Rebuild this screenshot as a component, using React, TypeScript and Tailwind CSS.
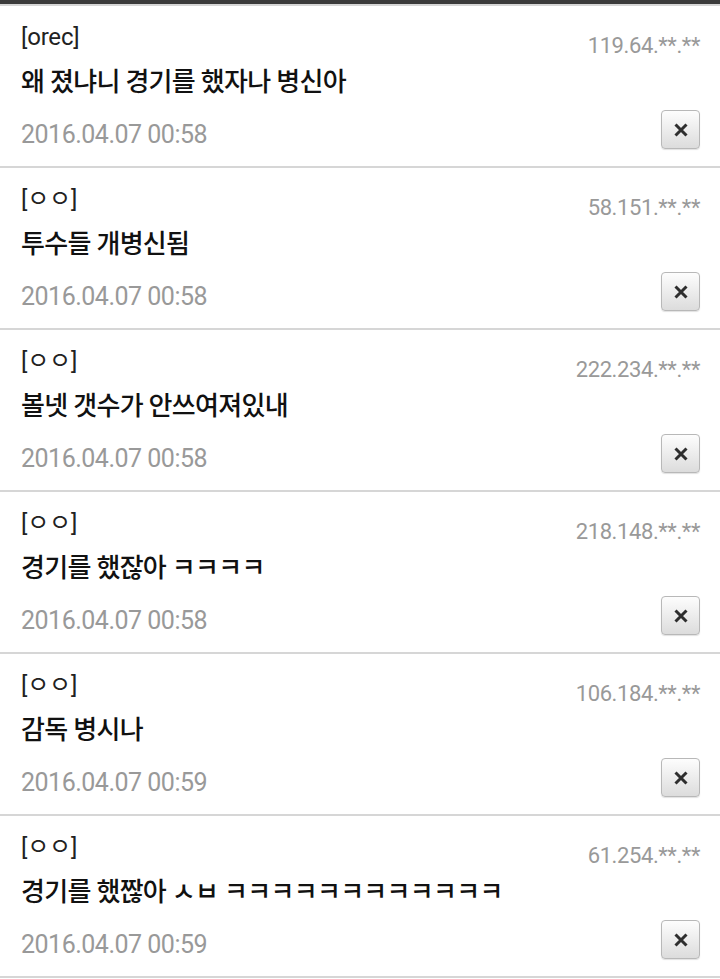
const COMMENTS = [
  { name: "[orec]", ip: "119.64.**.**", text: "왜 졌냐니 경기를 했자나 병신아", date: "2016.04.07 00:58" },
  { name: "[ㅇㅇ]", ip: "58.151.**.**", text: "투수들 개병신됨", date: "2016.04.07 00:58" },
  { name: "[ㅇㅇ]", ip: "222.234.**.**", text: "볼넷 갯수가 안쓰여져있내", date: "2016.04.07 00:58" },
  { name: "[ㅇㅇ]", ip: "218.148.**.**", text: "경기를 했잖아 ㅋㅋㅋㅋ", date: "2016.04.07 00:58" },
  { name: "[ㅇㅇ]", ip: "106.184.**.**", text: "감독 병시나", date: "2016.04.07 00:59" },
  { name: "[ㅇㅇ]", ip: "61.254.**.**", text: "경기를 했짢아 ㅅㅂ ㅋㅋㅋㅋㅋㅋㅋㅋㅋㅋㅋㅋ", date: "2016.04.07 00:59" },
];

const FONT = "font-['Roboto','Noto_Sans_CJK_KR',sans-serif]";

export default function App() {
  return (
    <div className={`min-h-[979px] w-[720px] bg-white ${FONT}`}>
      <div className="h-[4px] bg-[#3b3b3b]" />
      {COMMENTS.map((c, i) => (
        <CommentRow key={i} {...c} />
      ))}
      <div className="h-[2px] bg-[#d6d6d6]" />
    </div>
  );
}

function CommentRow({ name, ip, text, date }: { name: string; ip: string; text: string; date: string }) {
  return (
    <div className="flex h-[162px] justify-between border-t-2 border-[#d6d6d6]">
      <div className="flex flex-col pl-[21px] pt-[16px]">
        <span className="text-[24px] leading-[30px] tracking-[-0.2px] text-[#222]">{name}</span>
        <span className="mt-[12px] text-[26px] font-medium leading-[36px] tracking-[-0.7px] text-[#111]">{text}</span>
        <span className="mt-[19px] text-[25px] leading-[32px] tracking-[-0.5px] text-[#999]">{date}</span>
      </div>
      <div className="flex flex-col items-end pr-[20px] pt-[26px]">
        <span className="text-[22px] leading-[28px] tracking-[-0.4px] text-[#999]">{ip}</span>
        <button
          type="button"
          className="mt-[50px] flex h-[39px] w-[39px] items-center justify-center rounded-[4px] border border-[#b8b8b8] bg-gradient-to-b from-[#fdfdfd] to-[#dcdcdc] shadow-[0_1px_1px_rgba(0,0,0,0.12)]"
        >
          <svg width="16" height="16" viewBox="0 0 16 16">
            <path d="M2.5 2.5 13.5 13.5M13.5 2.5 2.5 13.5" stroke="#2e2e2e" strokeWidth="3" strokeLinecap="butt" />
          </svg>
        </button>
      </div>
    </div>
  );
}
